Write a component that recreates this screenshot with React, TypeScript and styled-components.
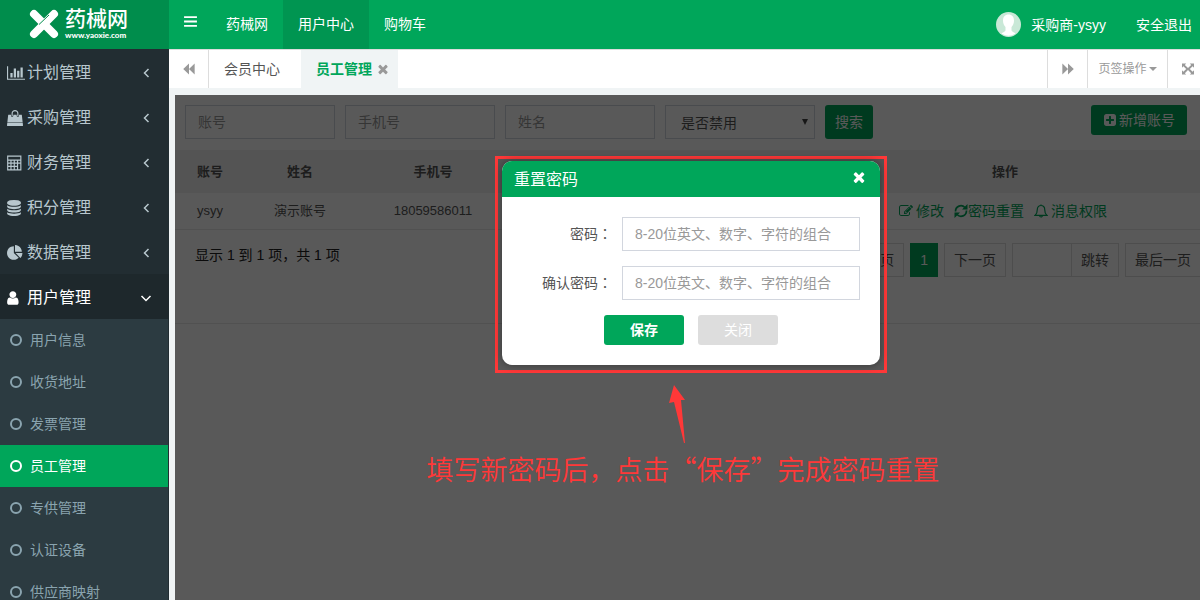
import React from "react";
import styled, { createGlobalStyle, css } from "styled-components";

const GREEN = "#00a65a";

const GlobalStyle = createGlobalStyle`
  *, *::before, *::after { box-sizing: border-box; }
  body {
    margin: 0;
    background: #f0f4f5;
    color: #555;
    font-family: "Liberation Sans", "Noto Sans CJK SC", sans-serif;
    font-size: 14px;
    line-height: 20px;
  }
  button, input, select { font: inherit; color: inherit; }
  button { cursor: pointer; border: 0; background: none; padding: 0; }
  a { color: inherit; text-decoration: none; }
  ul { list-style: none; margin: 0; padding: 0; }
`;

/* ---------- icons ---------- */

const glyphs = {
  chart: "M640 896v512h-256v-512h256zm384-512v1024h-256v-1024h256zm1024 1152v128h-2048v-1536h128v1408h1920zm-640-896v768h-256v-768h256zm384-384v1152h-256v-1152h256z",
  bag: "M1757 1408l35 313q3 28-16 50-19 21-48 21h-1664q-29 0-48-21-19-22-16-50l35-313h1722zM1664 576l86 768h-1708l86-768q3-24 21-40.500t43-16.500h256v128q0 53 37.500 90.500t90.500 37.500 90.500-37.500 37.500-90.500v-128h384v128q0 53 37.500 90.500t90.500 37.500 90.500-37.500 37.500-90.500v-128h256q25 0 43 16.500t21 40.500zM1280 384v256q0 26-19 45t-45 19-45-19-19-45v-256q0-106-75-181t-181-75-181 75-75 181v256q0 26-19 45t-45 19-45-19-19-45v-256q0-159 112.500-271.500t271.500-112.500 271.500 112.500 112.500 271.500z",
  calculator: "M64 64h1600v1664h-1600zM192 192v320h1344v-320zM192 640v200h240v-200zM560 640v200h240v-200zM928 640v200h240v-200zM1296 640v200h240v-200zM192 968v240h240v-240zM560 968v240h240v-240zM928 968v240h240v-240zM1296 968v632h240v-632zM192 1336v264h240v-264zM560 1336v264h240v-264zM928 1336v264h240v-264z",
  database: "M896 768q237 0 443-43t325-127v170q0 69-103 128t-280 93.500-385 34.500-385-34.500-280-93.500-103-128v-170q119 84 325 127t443 43zm0 768q237 0 443-43t325-127v170q0 69-103 128t-280 93.500-385 34.500-385-34.500-280-93.500-103-128v-170q119 84 325 127t443 43zm0-384q237 0 443-43t325-127v170q0 69-103 128t-280 93.500-385 34.500-385-34.500-280-93.500-103-128v-170q119 84 325 127t443 43zm0-1152q208 0 385 34.500t280 93.500 103 128v128q0 69-103 128t-280 93.500-385 34.500-385-34.500-280-93.500-103-128v-128q0-69 103-128t280-93.500 385-34.500z",
  pie: "M768 890l546 546q-106 108-247.500 168t-298.500 60q-209 0-385.500-103t-279.500-279.500-103-385.500 103-385.500 279.500-279.500 385.500-103v762zm187 6h773q0 157-60 298.500t-168 247.500zm709-128h-768v-768q209 0 385.500 103t279.500 279.500 103 385.500z",
  user: "M1536 1399q0 109-62.500 187t-150.500 78h-854q-88 0-150.500-78t-62.500-187q0-85 8.500-160.500t31.500-152 58.500-131 94-89 134.500-34.500q131 128 313 128t313-128q76 0 134.500 34.500t94 89 58.500 131 31.500 152 8.500 160.500zm-256-887q0 159-112.500 271.500t-271.500 112.500-271.500-112.500-112.500-271.500 112.500-271.500 271.500-112.500 271.500 112.500 112.500 271.500z",
  close: "M1490 1322q0 40-28 68l-136 136q-28 28-68 28t-68-28l-294-294-294 294q-28 28-68 28t-68-28l-136-136q-28-28-28-68t28-68l294-294-294-294q-28-28-28-68t28-68l136-136q28-28 68-28t68 28l294 294 294-294q28-28 68-28t68 28l136 136q28 28 28 68t-28 68l-294 294 294 294q28 28 28 68z",
  plus: "M1408 960v-128q0-26-19-45t-45-19h-320v-320q0-26-19-45t-45-19h-128q-26 0-45 19t-19 45v320h-320q-26 0-45 19t-19 45v128q0 26 19 45t45 19h320v320q0 26 19 45t45 19h128q26 0 45-19t19-45v-320h320q26 0 45-19t19-45zm256-544v960q0 119-84.500 203.500t-203.500 84.500h-960q-119 0-203.500-84.500t-84.500-203.500v-960q0-119 84.500-203.500t203.500-84.500h960q119 0 203.500 84.500t84.500 203.500z",
  edit: "M888 1184l116-116-152-152-116 116v56h96v96h56zm440-720q-16-16-33 1l-350 350q-17 17-1 33t33-1l350-350q17-17 1-33zm80 594v190q0 119-84.500 203.500t-203.500 84.500h-832q-119 0-203.500-84.500t-84.500-203.500v-832q0-119 84.500-203.500t203.500-84.500h832q63 0 117 25 15 7 18 23 3 17-9 29l-49 49q-14 14-32 8-23-6-45-6h-832q-66 0-113 47t-47 113v832q0 66 47 113t113 47h832q66 0 113-47t47-113v-126q0-13 9-22l64-64q15-15 35-7t20 29zm-96-738l288 288-672 672h-288v-288zm444 132l-92 92-288-288 92-92q28-28 68-28t68 28l152 152q28 28 28 68t-28 68z",
  backward: "M896 200v1392l-740-696zM1620 200v1392l-724-696z",
  forward: "M172 200v1392l724-696zM896 200v1392l740-696z",
  expand: "M128 192h540l-176 176 404 404 404-404-176-176h540v540l-176-176-364 340 364 340 176-176v540h-540l176-176-404-404-404 404 176 176h-540v-540l176 176 364-340-364-340-176 176z",
  bars: "M128 256h1536v220h-1536zM128 786h1536v220h-1536zM128 1316h1536v220h-1536z",
};

type GlyphName = keyof typeof glyphs;

/* Left edge of the glyphs that do not start at the origin of their box. */
const glyphLeft: Partial<Record<GlyphName, number>> = {
  user: 240,
  database: 110,
  calculator: 50,
};

const Svg = styled.svg`
  display: block;
  flex: none;
  fill: currentColor;
`;

function Icon({ name, size = 14 }: { name: GlyphName; size?: number }) {
  const box = name === "chart" ? 2048 : 1792;
  const width = name === "chart" ? Math.round((size * 2048) / 1792) : size;
  return (
    <Svg width={width} height={size} viewBox={`${glyphLeft[name] ?? 0} 0 ${box} 1792`} fillRule="evenodd" aria-hidden>
      <path d={glyphs[name]} />
    </Svg>
  );
}

function Refresh() {
  return (
    <Svg width="14" height="16" viewBox="0 0 14 16" aria-hidden>
      <path d="M1.500 8.500C1.500 3 7.500 1 11 4.500M12.500 7.500C12.500 13 6.500 15 3 11.500" fill="none" stroke="currentColor" strokeWidth="1.700" />
      <path d="M13.500 1v5.500H8zM.5 15V9.500H6z" />
    </Svg>
  );
}

function Bell() {
  return (
    <Svg width="14" height="14" viewBox="0 0 14 14" aria-hidden>
      <path
        d="M7 .5v1M1.200 11.300h11.600C11 9.600 10.700 8 10.700 5.500 10.700 3 9.200 1.500 7 1.500S3.300 3 3.300 5.500C3.300 8 3 9.600 1.200 11.300zM5.600 11.500c0 2 2.800 2 2.800 0"
        fill="none"
        stroke="currentColor"
        strokeWidth="1.200"
      />
    </Svg>
  );
}

function Chevron({ open }: { open?: boolean }) {
  return (
    <Svg width="12" height="12" viewBox="0 0 12 12" aria-hidden>
      <path d={open ? "M1.500 4L6 8.500 10.500 4" : "M8.500 2L4.500 6 8.500 10"} fill="none" stroke="currentColor" strokeWidth="1.500" />
    </Svg>
  );
}

function LogoMark() {
  return (
    <Svg width="30" height="30" viewBox="0 0 30 30" aria-hidden>
      <g stroke="#fff" strokeWidth="8" strokeLinecap="round">
        <path d="M5 5L25 25" />
        <path d="M25 5L5 25" />
      </g>
      <path d="M20 6L10 15.500" stroke="#008d4c" strokeWidth="1" />
    </Svg>
  );
}

function Avatar() {
  return (
    <Svg width="25" height="25" viewBox="0 0 25 25" aria-hidden>
      <circle cx="12.500" cy="12.500" r="12.500" fill="#c9e8d7" />
      <path
        d="M12.500 2.500c-3.600 0-5.500 2.500-5.500 6 0 3 1 5 2.500 6.500v3.500c-1 1.500-2.800 2-4 3a12.500 12.500 0 0 0 14 0c-1.200-1-3-1.500-4-3V15c1.500-1.500 2.500-3.500 2.500-6.500 0-3.500-1.900-6-5.500-6z"
        fill="#fff"
      />
    </Svg>
  );
}

/* ---------- page shell ---------- */

const Page = styled.div`
  display: flex;
  flex-direction: column;
  height: 100vh;
  overflow: hidden;
`;

const Header = styled.header`
  display: flex;
  flex: none;
  height: 49px;
  background: ${GREEN};
  color: #fff;
`;

const Logo = styled.a`
  display: flex;
  align-items: center;
  gap: 6px;
  width: 169px;
  padding: 0 0 2px 29px;
  background: #008d4c;
`;

const LogoText = styled.span`
  display: flex;
  flex-direction: column;
`;

const LogoName = styled.strong`
  font-size: 21px;
  font-weight: 500;
  line-height: 22px;
`;

const LogoSite = styled.span`
  font: 900 8px/10px Lato, sans-serif;
`;

const TopNav = styled.nav`
  display: flex;
  flex: 1;
`;

const NavToggle = styled.button`
  width: 42px;
  padding: 0 0 6px 14px;
`;

const NavLink = styled.a<{ $active?: boolean }>`
  display: flex;
  align-items: center;
  padding: 0 15px 2px;
  background: ${(p) => (p.$active ? "#009551" : "transparent")};
`;

const Account = styled.div`
  display: flex;
  align-items: center;
  gap: 30px;
  padding-right: 8px;
`;

const AccountLink = styled.a`
  display: flex;
  align-items: center;
  gap: 10px;
`;

const Body = styled.div`
  display: flex;
  flex: 1;
  min-height: 0;
`;

/* ---------- sidebar ---------- */

const Sidebar = styled.aside`
  flex: none;
  width: 169px;
  overflow: hidden;
  background: #222d32;
  color: #b8c7ce;
`;

const MenuButton = styled.button<{ $open?: boolean }>`
  display: flex;
  align-items: center;
  width: 100%;
  height: 45px;
  padding: 2px 17px 0 7px;
  font-size: 16px;
  text-align: left;
  ${(p) => p.$open && css`background: #1e282c; color: #fff;`}
`;

const MenuIcon = styled.span`
  width: 20px;
`;

const MenuLabel = styled.span`
  flex: 1;
`;

const SubMenu = styled.ul`
  margin-right: 1px;
  background: #2c3b41;
`;

const SubLink = styled.a<{ $active?: boolean }>`
  display: flex;
  align-items: center;
  gap: 8px;
  height: 42px;
  padding-left: 10px;
  color: ${(p) => (p.$active ? "#fff" : "#8aa4af")};
  background: ${(p) => (p.$active ? GREEN : "transparent")};
`;

const Ring = styled.span`
  width: 12px;
  height: 12px;
  border: 2px solid currentColor;
  border-radius: 50%;
`;

/* ---------- tab strip ---------- */

const Main = styled.main`
  display: flex;
  flex: 1;
  flex-direction: column;
  min-width: 0;
`;

const TabStrip = styled.div`
  display: flex;
  flex: none;
  height: 39px;
  overflow: hidden;
  border-top: 1px solid #ddd;
  background: #fff;
`;

const StripButton = styled.button<{ $width: number; $side: "left" | "right" }>`
  display: flex;
  flex: none;
  align-items: center;
  justify-content: center;
  gap: 2px;
  width: ${(p) => p.$width}px;
  color: #999;
  font-size: 12px;
  ${(p) => (p.$side === "left" ? "border-right" : "border-left")}: 1px solid #ddd;
  &:last-child { margin-right: -8px; }
`;

const Tabs = styled.div`
  display: flex;
  flex: 1;
`;

const Tab = styled.div<{ $active?: boolean }>`
  display: flex;
  align-items: center;
  gap: 4px;
  padding: 0 ${(p) => (p.$active ? 8 : 21)}px 0 15px;
  color: ${(p) => (p.$active ? GREEN : "#555")};
  font-weight: ${(p) => (p.$active ? 700 : 400)};
  background: ${(p) => (p.$active ? "#f0f4f5" : "transparent")};
`;

const TabClose = styled.button`
  color: #999;
`;

const Caret = styled.span`
  border: 4px solid transparent;
  border-top-color: currentColor;
  border-bottom: 0;
`;

/* ---------- staff list ---------- */

const Panel = styled.section`
  position: relative;
  flex: 1;
  margin: 7px 0 0 6px;
  overflow: hidden;
  background: #fff;
`;

const Filters = styled.form`
  display: flex;
  align-items: flex-start;
  gap: 10px;
  height: 55px;
  padding: 10px 13px 0 10px;
`;

const Field = styled.input`
  width: 150px;
  height: 34px;
  padding: 0 12px;
  border: 1px solid #d2d6de;
  background: #fff;
  &::placeholder { color: #999; opacity: 1; }
`;

const SelectBox = styled.span`
  position: relative;
  &::after {
    content: "";
    position: absolute;
    top: 14px;
    right: 7px;
    border: 3px solid transparent;
    border-top: 6px solid #444;
    border-bottom: 0;
    pointer-events: none;
  }
`;

const Select = styled.select`
  display: block;
  width: 150px;
  height: 34px;
  padding: 2px 15px 0;
  border: 1px solid #d2d6de;
  border-radius: 0;
  background: #fff;
  appearance: none;
`;

const Button = styled.button<{ $width: number; $height?: number; $muted?: boolean; $bold?: boolean }>`
  display: flex;
  align-items: center;
  justify-content: center;
  gap: 2px;
  width: ${(p) => p.$width}px;
  height: ${(p) => p.$height ?? 30}px;
  border-radius: 3px;
  background: ${(p) => (p.$muted ? "#ddd" : GREEN)};
  color: #fff;
  font-weight: ${(p) => (p.$bold ? 700 : 400)};
`;

const Spacer = styled.span`
  flex: 1;
`;

const Table = styled.table`
  width: 100%;
  table-layout: fixed;
  border-collapse: collapse;
  font-size: 13px;
  text-align: center;
  th, td { padding: 0; }
  th { height: 43px; background: #f0f0f0; }
  td { height: 36px; border-bottom: 1px solid #e8e8e8; }
`;

const Col = styled.col<{ $width?: number }>`
  width: ${(p) => (p.$width ? `${p.$width}px` : "auto")};
`;

const Actions = styled.div`
  display: flex;
  justify-content: center;
  gap: 10px;
  padding-right: 4px;
  color: ${GREEN};
  font-size: 14px;
`;

const Action = styled.a<{ $tight?: boolean }>`
  display: flex;
  align-items: center;
  gap: ${(p) => (p.$tight ? 0 : 3)}px;
`;

const Footer = styled.div`
  display: flex;
  justify-content: space-between;
  height: 94px;
  padding: 13px 0 0 20px;
  border-bottom: 1px solid #e8e8e8;
  color: #222;
`;

const Summary = styled.p`
  margin: 2px 0 0;
`;

const Pager = styled.ul`
  display: flex;
  gap: 6px;
  margin-right: -1px;
  color: #555;
`;

const PageItem = styled.li`
  display: flex;
`;

const PageButton = styled.button<{ $current?: boolean }>`
  height: 34px;
  padding: 0 9px;
  border: 1px solid ${(p) => (p.$current ? GREEN : "#ddd")};
  ${(p) => p.$current && css`background: ${GREEN}; color: #fff;`}
`;

const PageInput = styled(Field)`
  width: 60px;
  margin-right: -1px;
  border-color: #ddd;
`;

/* ---------- reset dialog and its callout ---------- */

const Overlay = styled.div`
  position: absolute;
  inset: 0;
  display: flex;
  flex-direction: column;
  align-items: center;
  padding: 61px 0 0 7px;
  background: rgba(0, 0, 0, 0.65);
`;

const Highlight = styled.div`
  width: 392px;
  padding: 2px 4px 5px;
  border: 3px solid #ff3838;
`;

const Dialog = styled.form`
  overflow: hidden;
  border-radius: 10px;
  background: #fff;
  box-shadow: 0 0 8px rgba(0, 0, 0, 0.4);
`;

const DialogHead = styled.div`
  display: flex;
  align-items: center;
  justify-content: space-between;
  height: 36px;
  padding: 2px 13px 0 12px;
  background: ${GREEN};
  color: #fff;
  font-size: 16px;
`;

const DialogClose = styled.button`
  padding-bottom: 6px;
`;

const DialogBody = styled.div`
  display: flex;
  flex-direction: column;
  gap: 15px;
  padding: 20px;
`;

const FormRow = styled.div`
  display: flex;
  align-items: center;
  gap: 10px;
`;

const Label = styled.label`
  flex: 1;
  line-height: 20px;
  padding-bottom: 2px;
  text-align: right;
`;

const Colon = styled.span`
  font-family: "Noto Sans CJK TC", sans-serif;
`;

const PasswordField = styled(Field)`
  width: 238px;
`;

const DialogButtons = styled.div`
  display: flex;
  justify-content: center;
  gap: 14px;
`;

const Callout = styled.div`
  display: flex;
  flex-direction: column;
  align-items: center;
  margin-right: 16px;
  color: #ff3838;
  font: 350 27px/40px "Noto Sans CJK SC", sans-serif;
  white-space: nowrap;
`;

const CalloutArrow = styled(Svg)`
  margin: 12px 12px 6px 0;
`;

const menu: { icon: GlyphName; label: string; open?: boolean }[] = [
  { icon: "chart", label: "计划管理" },
  { icon: "bag", label: "采购管理" },
  { icon: "calculator", label: "财务管理" },
  { icon: "database", label: "积分管理" },
  { icon: "pie", label: "数据管理" },
  { icon: "user", label: "用户管理", open: true },
];

const subMenu = ["用户信息", "收货地址", "发票管理", "员工管理", "专供管理", "认证设备", "供应商映射"];

const passwordRows = [
  { id: "password", label: "密码" },
  { id: "confirm", label: "确认密码" },
];

export default function App() {
  return (
    <Page lang="zh-CN">
      <GlobalStyle />
      <Header>
        <Logo href="#">
          <LogoMark />
          <LogoText>
            <LogoName>药械网</LogoName>
            <LogoSite>www.yaoxie.com</LogoSite>
          </LogoText>
        </Logo>
        <TopNav>
          <NavToggle type="button" aria-label="菜单"><Icon name="bars" size={15} /></NavToggle>
          <NavLink href="#">药械网</NavLink>
          <NavLink href="#" $active>用户中心</NavLink>
          <NavLink href="#">购物车</NavLink>
        </TopNav>
        <Account>
          <AccountLink href="#"><Avatar />采购商-ysyy</AccountLink>
          <AccountLink href="#">安全退出</AccountLink>
        </Account>
      </Header>
      <Body>
        <Sidebar>
          {menu.map((m) => (
            <MenuButton key={m.label} type="button" $open={m.open}>
              <MenuIcon><Icon name={m.icon} size={16} /></MenuIcon>
              <MenuLabel>{m.label}</MenuLabel>
              <Chevron open={m.open} />
            </MenuButton>
          ))}
          <SubMenu>
            {subMenu.map((label) => (
              <li key={label}>
                <SubLink href="#" $active={label === "员工管理"}><Ring />{label}</SubLink>
              </li>
            ))}
          </SubMenu>
        </Sidebar>
        <Main>
          <TabStrip>
            <StripButton type="button" $width={40} $side="left" aria-label="向左"><Icon name="backward" /></StripButton>
            <Tabs>
              <Tab>会员中心</Tab>
              <Tab $active>
                员工管理
                <TabClose type="button" aria-label="关闭标签"><Icon name="close" /></TabClose>
              </Tab>
            </Tabs>
            <StripButton type="button" $width={40} $side="right" aria-label="向右"><Icon name="forward" /></StripButton>
            <StripButton type="button" $width={80} $side="right">页签操作<Caret /></StripButton>
            <StripButton type="button" $width={41} $side="right" aria-label="全屏"><Icon name="expand" /></StripButton>
          </TabStrip>
          <Panel>
            <Filters>
              <Field placeholder="账号" aria-label="账号" />
              <Field placeholder="手机号" aria-label="手机号" />
              <Field placeholder="姓名" aria-label="姓名" />
              <SelectBox>
                <Select aria-label="是否禁用"><option>是否禁用</option></Select>
              </SelectBox>
              <Button type="button" $width={48} $height={34}>搜索</Button>
              <Spacer />
              <Button type="button" $width={96}><Icon name="plus" />新增账号</Button>
            </Filters>
            <Table>
              <colgroup>
                <Col $width={70} />
                <Col $width={110} />
                <Col $width={156} />
                <Col />
                <Col $width={390} />
              </colgroup>
              <thead>
                <tr><th>账号</th><th>姓名</th><th>手机号</th><th /><th>操作</th></tr>
              </thead>
              <tbody>
                <tr>
                  <td>ysyy</td>
                  <td>演示账号</td>
                  <td>18059586011</td>
                  <td />
                  <td>
                    <Actions>
                      <Action href="#"><Icon name="edit" />修改</Action>
                      <Action href="#" $tight><Refresh />密码重置</Action>
                      <Action href="#"><Bell />消息权限</Action>
                    </Actions>
                  </td>
                </tr>
              </tbody>
            </Table>
            <Footer>
              <Summary>显示 1 到 1 项，共 1 项</Summary>
              <Pager>
                <PageItem><PageButton type="button">上一页</PageButton></PageItem>
                <PageItem><PageButton type="button" $current>1</PageButton></PageItem>
                <PageItem><PageButton type="button">下一页</PageButton></PageItem>
                <PageItem>
                  <PageInput aria-label="页码" />
                  <PageButton type="button">跳转</PageButton>
                </PageItem>
                <PageItem><PageButton type="button">最后一页</PageButton></PageItem>
              </Pager>
            </Footer>
            <Overlay>
              <Highlight>
                <Dialog role="dialog" aria-label="重置密码">
                  <DialogHead>
                    重置密码
                    <DialogClose type="button" aria-label="关闭窗口"><Icon name="close" size={16} /></DialogClose>
                  </DialogHead>
                  <DialogBody>
                    {passwordRows.map((row) => (
                      <FormRow key={row.id}>
                        <Label htmlFor={row.id}>{row.label}<Colon lang="zh-TW">：</Colon></Label>
                        <PasswordField id={row.id} type="text" placeholder="8-20位英文、数字、字符的组合" />
                      </FormRow>
                    ))}
                    <DialogButtons>
                      <Button type="button" $width={80} $bold>保存</Button>
                      <Button type="button" $width={80} $muted>关闭</Button>
                    </DialogButtons>
                  </DialogBody>
                </Dialog>
              </Highlight>
              <Callout>
                <CalloutArrow width="16" height="58" viewBox="0 0 16 58" aria-hidden>
                  <path d="M5 0L16 15H12L16 58H15L5 17 0 18z" />
                </CalloutArrow>
                填写新密码后，点击“保存”完成密码重置
              </Callout>
            </Overlay>
          </Panel>
        </Main>
      </Body>
    </Page>
  );
}
